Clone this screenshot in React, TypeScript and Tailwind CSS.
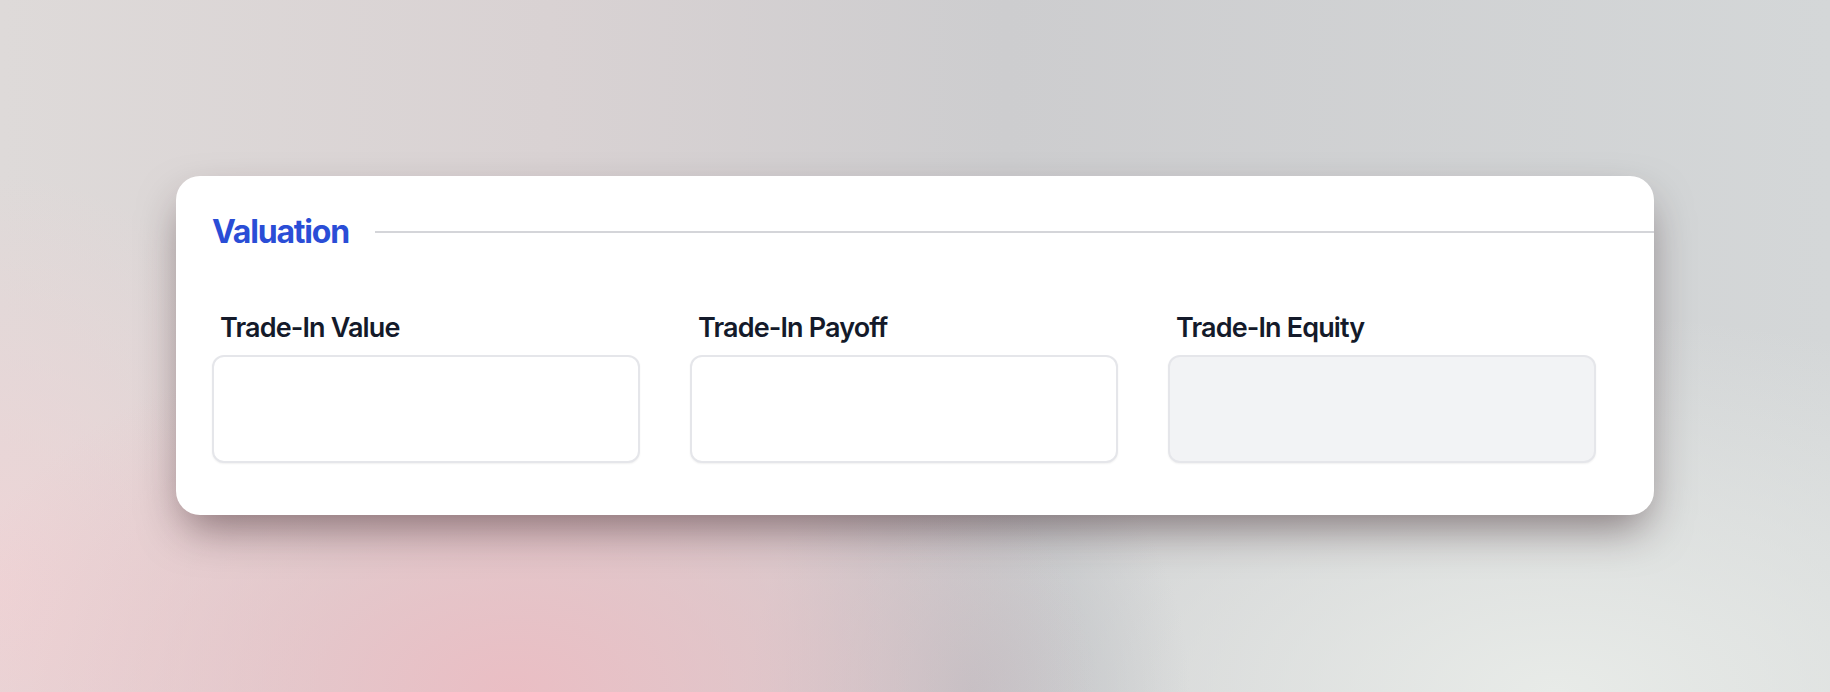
const fields = [
  { label: "Trade-In Value", readOnly: false },
  { label: "Trade-In Payoff", readOnly: false },
  { label: "Trade-In Equity", readOnly: true },
];

export default function App() {
  return (
    <div className="h-[692px] w-full overflow-hidden pl-[176px] pt-[176px] font-['Inter',sans-serif] bg-[radial-gradient(ellipse_32%_55%_at_28%_100%,rgba(234,190,196,1),rgba(234,190,196,0)),radial-gradient(ellipse_12%_40%_at_53%_100%,rgba(190,192,196,1),rgba(190,192,196,0)),radial-gradient(ellipse_40%_55%_at_85%_100%,rgba(232,235,232,1),rgba(232,235,232,0)),radial-gradient(ellipse_18%_60%_at_0%_85%,rgba(238,212,214,1),rgba(238,212,214,0)),linear-gradient(to_right,#dedad9,#d9d2d3_30%,#cdcdcf_55%,#d4d7d8)]">
      <div className="w-[1478px] rounded-3xl bg-white pl-9 pt-10 pb-[52px] shadow-[0_20px_44px_-8px_rgba(45,20,25,0.5)]">
        <div className="flex h-8 items-center">
          <h2 className="text-[32px] font-bold leading-none tracking-[-0.037em] text-[#2a4dd6]">
            Valuation
          </h2>
          <div className="ml-[26px] h-[2px] flex-1 bg-[#d4d5d9]" />
        </div>

        <div className="mt-[66px] flex gap-[50px]">
          {fields.map((f) => (
            <div key={f.label} className="w-[428px]">
              <label className="block pl-2 text-[27px] font-semibold leading-none tracking-[-0.032em] text-[#141a2a]">
                {f.label}
              </label>
              <input
                readOnly={f.readOnly}
                className={
                  f.readOnly
                    ? "mt-[14px] block h-[108px] w-full rounded-xl border-2 border-[#e5e6ea] bg-[#f2f3f5] shadow-[0_1px_2px_rgba(0,0,0,0.06)] outline-none"
                    : "mt-[14px] block h-[108px] w-full rounded-xl border-2 border-[#e5e6ea] bg-white shadow-[0_1px_2px_rgba(0,0,0,0.06)] outline-none"
                }
              />
            </div>
          ))}
        </div>
      </div>
    </div>
  );
}
